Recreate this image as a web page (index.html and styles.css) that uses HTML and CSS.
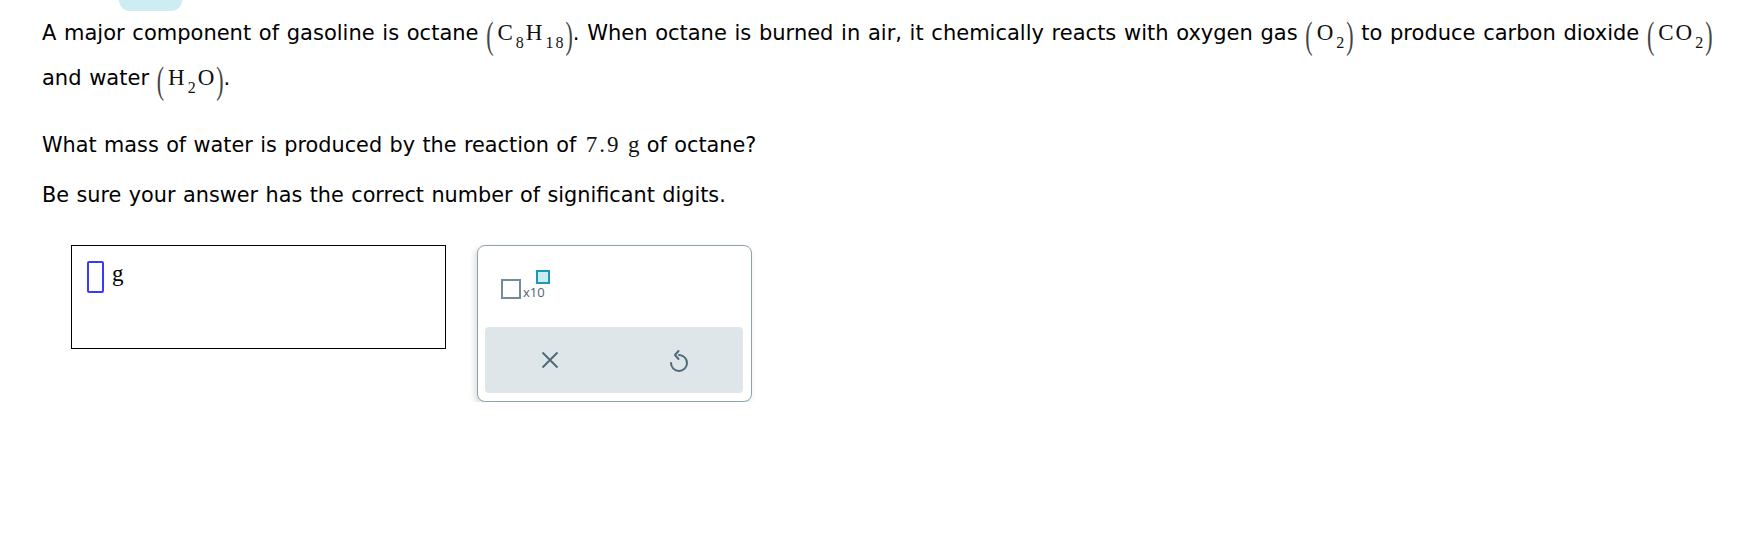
FILE: index.html
```html
<!DOCTYPE html>
<html lang="en">
<head>
<meta charset="utf-8">
<title>Octane combustion</title>
<link rel="stylesheet" href="styles.css">
</head>
<body>
<div class="tab"></div>
<div class="content">
  <p class="p1">A major component of gasoline is octane <span class="m"><span class="pl">(</span>C<span class="sub">8</span>H<span class="sub">18</span><span class="pr">)</span></span>. When octane is burned in air, it chemically reacts with oxygen gas <span class="m"><span class="pl">(</span>O<span class="sub">2</span><span class="pr">)</span></span> to produce carbon dioxide <span class="m"><span class="pl">(</span>CO<span class="sub">2</span><span class="pr">)</span></span> and water <span class="m"><span class="pl">(</span>H<span class="sub">2</span>O<span class="pr">)</span></span>.</p>
  <p class="p2">What mass of water is produced by the reaction of <span class="m num">7.9</span> <span class="m unitg">g</span> of octane?</p>
  <p class="p3">Be sure your answer has the correct number of significant digits.</p>
  <div class="answer-row">
    <div class="ans">
      <div class="inp"></div>
      <span class="unit">g</span>
    </div>
    <div class="pad">
      <div class="pad-top">
        <div class="x10">
          <div class="base"></div>
          <span class="lbl">x10</span>
          <div class="exp"></div>
        </div>
      </div>
      <div class="pad-keys">
        <div class="key">
          <svg width="18" height="18" viewBox="0 0 18 18"><path d="M1.5 1.5L16.5 16.5M16.5 1.5L1.5 16.5" stroke="#4f6b77" stroke-width="2" fill="none"/></svg>
        </div>
        <div class="key">
          <svg width="20" height="25" viewBox="0 0 20 25"><path d="M10 7A8 8 0 1 1 2 15" stroke="#4f6b77" stroke-width="2" fill="none" stroke-linecap="round"/><path d="M9.5 3L6 7L9.5 11" stroke="#4f6b77" stroke-width="2" fill="none" stroke-linecap="round" stroke-linejoin="round"/></svg>
        </div>
      </div>
    </div>
  </div>
</div>
</body>
</html>
```
FILE: styles.css
```css
body {
  margin: 0;
  font-family: "DejaVu Sans", Verdana, sans-serif;
  font-size: 21px;
  color: #000;
  background: #fff;
}
.tab {
  margin-left: 119px;
  width: 63px;
  height: 11px;
  background: #cdedf3;
  border-radius: 0 0 11px 11px;
}
.content {
  padding-left: 42px;
}
.p1 {
  margin: 0;
  line-height: 45px;
  width: 1700px;
  word-spacing: 1px;
}
.p2 {
  margin: 29px 0 0;
  font-size: 20.8px;
  line-height: 30px;
  word-spacing: 0.8px;
}
.p3 {
  margin: 20px 0 0;
  font-size: 20.8px;
  line-height: 30px;
  word-spacing: 0.8px;
}
.m {
  font-family: "Liberation Serif", "Times New Roman", serif;
  font-size: 23px;
  line-height: 1;
  letter-spacing: 2px;
  word-spacing: 0;
  color: #111;
}
.pl, .pr {
  display: inline-block;
  font-size: 22px;
  line-height: 22px;
  letter-spacing: 0;
  color: #444;
  transform-origin: 50% 12.7px;
  transform: translateY(3.7px) scaleY(1.75);
}
.pl { margin-right: 4px; }
.pr { margin-left: 0; }
.sub {
  font-size: 16px;
  vertical-align: -8px;
  margin-left: 1px;
}
.num { margin: 0 0 0 2px; }
.unitg { margin: 0; letter-spacing: 0; }
.answer-row {
  display: flex;
  align-items: flex-start;
  gap: 31px;
  margin-top: 35px;
  padding-left: 29px;
}
.ans {
  box-sizing: border-box;
  width: 375px;
  height: 104px;
  border: 1px solid #000;
  padding: 15px;
  display: flex;
  align-items: flex-start;
  gap: 8px;
}
.inp {
  box-sizing: border-box;
  width: 17px;
  height: 32px;
  border: 2px solid #3a3aff;
  border-radius: 2px;
}
.unit {
  font-family: "Liberation Serif", "Times New Roman", serif;
  font-size: 23px;
  line-height: 26px;
}
.pad {
  box-sizing: border-box;
  width: 275px;
  height: 157px;
  border: 1px solid #8da2aa;
  border-radius: 8px;
  background: #fff;
  box-shadow: -2px 3px 6px rgba(0, 0, 0, 0.15);
  display: flex;
  flex-direction: column;
}
.pad-top {
  box-sizing: border-box;
  height: 81px;
  padding: 33px 0 0 23px;
}
.x10 {
  position: relative;
  display: flex;
  align-items: flex-end;
  width: fit-content;
}
.base {
  box-sizing: border-box;
  width: 20px;
  height: 20px;
  border: 2px solid #728d97;
}
.lbl {
  font-family: "Open Sans", sans-serif;
  font-size: 13px;
  line-height: 1;
  color: #4b6570;
  margin-left: 2px;
}
.exp {
  position: absolute;
  left: 35px;
  top: -9px;
  box-sizing: border-box;
  width: 14px;
  height: 14px;
  border: 2px solid #1c9bb0;
  background: #c9edf3;
}
.pad-keys {
  margin: 0 8px 8px 7px;
  height: 66px;
  background: #dfe6e9;
  border-radius: 4px;
  display: flex;
}
.key {
  flex: 1;
  display: flex;
  align-items: center;
  justify-content: center;
}
```
